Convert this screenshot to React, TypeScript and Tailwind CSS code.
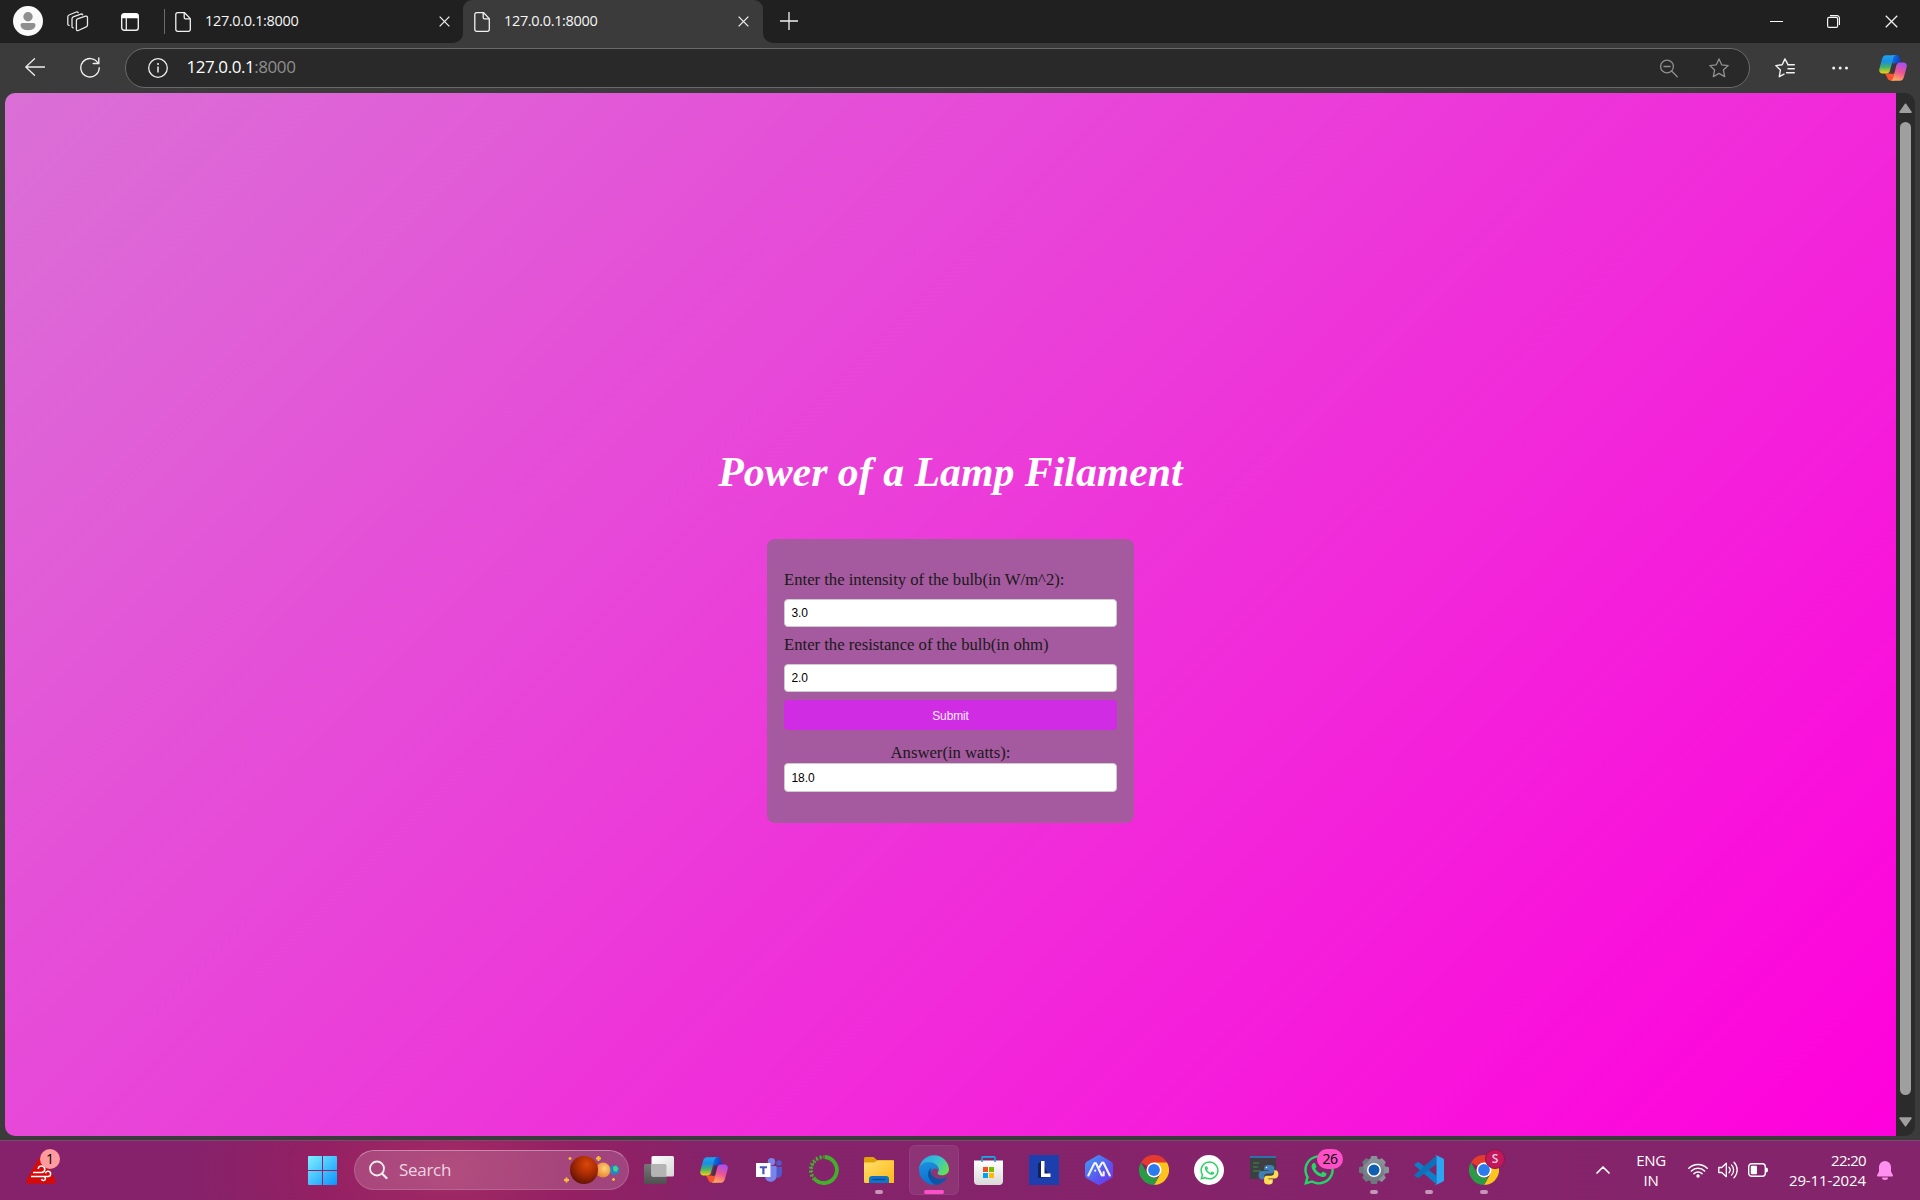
import React from "react";
import { FaWhatsapp } from "react-icons/fa";

type IconProps = { className?: string };

const DocIcon = ({ className }: IconProps) => (
  <svg className={className} width="16" height="20" viewBox="0 0 16 20" fill="none" stroke="#f2f2f2" strokeWidth="1.3" strokeLinejoin="round">
    <path d="M2.6 .7H9.6L15.3 6.6V17.5a1.8 1.8 0 0 1-1.8 1.8H2.6A1.8 1.8 0 0 1 .8 17.5V2.5A1.8 1.8 0 0 1 2.6 .7Z" />
    <path d="M9.2 .9V5.6a1.2 1.2 0 0 0 1.2 1.2H15" />
  </svg>
);

const CloseIcon = ({ size, width = 1.4 }: { size: number; width?: number }) => (
  <svg width={size} height={size} viewBox="0 0 12 12" stroke="#f0f0f0" strokeWidth={width} className="shrink-0">
    <path d="M.7 .7 11.3 11.3M11.3 .7 .7 11.3" />
  </svg>
);

const Copilot = ({ id }: { id: string }) => (
  <svg width="28" height="26" viewBox="0 0 28 26" className="shrink-0">
    <defs>
      <linearGradient id={id + "a"} x1="0" y1="0" x2="0" y2="1">
        <stop offset="0" stopColor="#1ba5f0" />
        <stop offset=".35" stopColor="#1b8ee0" />
        <stop offset=".65" stopColor="#46b26a" />
        <stop offset="1" stopColor="#f5d40c" />
      </linearGradient>
      <linearGradient id={id + "b"} x1=".6" y1="0" x2=".3" y2="1">
        <stop offset="0" stopColor="#a64ff0" />
        <stop offset=".5" stopColor="#ee5590" />
        <stop offset="1" stopColor="#ffae5c" />
      </linearGradient>
      <linearGradient id={id + "c"} x1="0" y1="0" x2="1" y2=".3">
        <stop offset="0" stopColor="#1677e6" />
        <stop offset="1" stopColor="#0b3fc4" />
      </linearGradient>
    </defs>
    <path d="M13 0h4.500c1.800 0 2.500 1 3 2.700L22 7.500h-3.500c-2 0-3 1-3.500 3L12.500 6Z" fill={"url(#" + id + "c)"} />
    <path d="M6 18.500h5l3-4 2 11H11.500C9.500 25.500 8.500 24 8 22Z" fill="#f4542f" />
    <path d="M7 .2H17c-1.600.4-2.300 1.500-2.800 3.300L11 15.600c-.6 2-1.600 3-3.600 3H3.500C.8 18.600-.3 16.500.4 13.800L3 4C3.700 1.500 5 .2 7 .2Z" fill={"url(#" + id + "a)"} />
    <path d="M21 25.700H11.500c1.600-.4 2.300-1.500 2.800-3.300L17.300 10.400c.6-2 1.600-3 3.600-3h3.600c2.700 0 3.800 2.100 3.100 4.800L25 21.800c-.7 2.500-2 3.900-4 3.900Z" fill={"url(#" + id + "b)"} />
    <path d="M14.500 8.500h3.800c-1 .5-1.400 1.400-1.800 2.700l-2 7.500h-3.600c.8-.5 1.200-1.400 1.600-2.700Z" fill="#3f3440" />
  </svg>
);

const TabTitle = ({ children }: { children: React.ReactNode }) => (
  <span className="mt-[-2px] whitespace-nowrap font-['Open_Sans','Noto_Sans',sans-serif] text-[14.5px] leading-5 tracking-[-0.34px] text-[#f5f5f5]">
    {children}
  </span>
);

const TitleBar = () => (
  <div className="flex h-[43px] w-full bg-[#3b3b3b]">
    <div className="flex w-[463px] items-center rounded-br-[10px] bg-[#202020]">
      <svg width="30" height="30" viewBox="0 0 30 30" className="ml-[13px] mt-[-1px]">
        <circle cx="15" cy="15" r="15" fill="#fafafa" />
        <circle cx="15" cy="10.700" r="4.700" fill="#8f8f8f" />
        <path d="M9.500 17H20.500a2 2 0 0 1 2 2C22.300 22.500 19 24.200 15 24.200S7.700 22.500 7.500 19a2 2 0 0 1 2-2Z" fill="#8f8f8f" />
      </svg>
      <svg width="22" height="21" viewBox="0 0 22 21" fill="none" stroke="#e8e8e8" strokeWidth="1.300" strokeLinejoin="round" strokeLinecap="round" className="ml-6">
        <path d="M10.500 7.800 18.500 5.200c1.100-.3 2 .3 2 1.400V14c0 .9-.5 1.600-1.300 1.900L11.300 19.500c-1.100.4-1.900-.1-1.900-1.200V9.600c0-.9.300-1.500 1.100-1.800Z" />
        <path d="M6.300 16.800c-.9.100-1.300-.4-1.300-1.300V7.700c0-.9.400-1.500 1.200-1.800L13.800 3.100c.9-.3 1.600 0 1.900.7" />
        <path d="M2.200 14.300c-.9.100-1.400-.4-1.400-1.300V5.800C.8 4.900 1.200 4.300 2 4L9.300 1c.9-.3 1.500-.1 1.900.6" />
      </svg>
      <svg width="18" height="18" viewBox="0 0 18 18" className="ml-8">
        <rect x=".7" y=".7" width="16.600" height="16.600" rx="2.500" fill="none" stroke="#eee" strokeWidth="1.400" />
        <path d="M.5 5.300V3A2.500 2.500 0 0 1 3 .5H15A2.500 2.500 0 0 1 17.500 3V5.300Z" fill="#fff" />
        <path d="M5.300 5V17" stroke="#eee" strokeWidth="1.300" />
      </svg>
      <div className="ml-[25px] h-[25px] w-px bg-[#6b6b6b]" />
      <DocIcon className="ml-[10px] mt-[1px]" />
      <div className="ml-[14px] flex"><TabTitle>127.0.0.1:8000</TabTitle></div>
      <div className="ml-auto mr-[13px]"><CloseIcon size={11} /></div>
    </div>
    <div className="w-[300px] bg-linear-to-b from-[#202020] from-50% to-[#3b3b3b] to-50%">
      <div className="flex h-full items-center rounded-t-[9px] bg-[#3b3b3b]">
        <DocIcon className="ml-[11px] mt-[1px]" />
        <div className="ml-[14px] flex"><TabTitle>127.0.0.1:8000</TabTitle></div>
        <div className="ml-auto mr-[14px]"><CloseIcon size={11} /></div>
      </div>
    </div>
    <div className="flex flex-1 items-center rounded-bl-[10px] bg-[#202020]">
      <svg width="18" height="18" viewBox="0 0 18 18" stroke="#f0f0f0" strokeWidth="1.300" className="ml-[17px] mt-[-1px]">
        <path d="M0 9H18M9 0V18" />
      </svg>
      <div className="ml-auto mr-[22px] flex items-center">
        <div className="h-px w-[13px] bg-white" />
        <svg width="13" height="13" viewBox="0 0 13 13" fill="none" stroke="#f5f5f5" strokeWidth="1.200" className="ml-[44px]">
          <rect x=".6" y="2.400" width="10" height="10" rx="1.500" />
          <path d="M3 .6H10A2.400 2.400 0 0 1 12.400 3V10" />
        </svg>
        <div className="ml-[45px]"><CloseIcon size={13} width={1.2} /></div>
      </div>
    </div>
  </div>
);

const ToolBar = () => (
  <div className="flex h-[50px] w-full items-center bg-[#3b3b3b]">
    <svg width="20" height="18" viewBox="0 0 20 18" fill="none" stroke="#eee" strokeWidth="1.300" strokeLinecap="round" strokeLinejoin="round" className="ml-[25px] mt-[-2px]">
      <path d="M9.500 .7 .8 9 9.500 17.300M.8 9H19.500" />
    </svg>
    <svg width="20" height="21" viewBox="0 0 20 21" fill="none" stroke="#eee" strokeWidth="1.400" strokeLinecap="round" className="ml-[35px] mt-[-1px]">
      <path d="M18 6.200A9.200 9.200 0 1 0 19.200 10.700" />
      <path d="M18.800 1V6.500H13.200" />
    </svg>
    <div className="ml-[25px] flex h-10 w-[1625px] items-center rounded-full border border-[#6a6a6a] bg-[#292929]">
      <svg width="20" height="20" viewBox="0 0 20 20" fill="none" stroke="#eee" strokeWidth="1.300" className="ml-[21.500px]">
        <circle cx="10" cy="10" r="9.300" />
        <path d="M10 8.600V14.500" strokeWidth="1.500" />
        <circle cx="10" cy="6" r="1" fill="#eee" stroke="none" />
      </svg>
      <span className="ml-[19px] mt-[-2px] whitespace-nowrap font-['Open_Sans','Noto_Sans',sans-serif] text-[17px] leading-6 tracking-[-0.44px] text-white">
        127.0.0.1<span className="text-[#8f8f8f]">:8000</span>
      </span>
      <svg width="18" height="19" viewBox="0 0 18 19" fill="none" stroke="#8f8f8f" strokeWidth="1.300" strokeLinecap="round" className="ml-auto">
        <circle cx="7" cy="7.500" r="6.400" />
        <path d="M4 7.500H10M11.600 12 17.300 17.800" />
      </svg>
      <svg width="20" height="20" viewBox="0 0 20 20" fill="none" stroke="#8f8f8f" strokeWidth="1.300" strokeLinejoin="round" className="ml-[31px] mr-5">
        <path d="M10 .9 12.700 6.800 19.200 7.600 14.400 12 15.700 18.600 10 15.400 4.300 18.600 5.600 12 .8 7.600 7.300 6.800Z" />
      </svg>
    </div>
    <svg width="20" height="20" viewBox="0 0 20 20" fill="none" stroke="#f2f2f2" strokeWidth="1.400" strokeLinejoin="round" strokeLinecap="round" className="ml-[25px]">
      <path d="M13 6.700 9.900 .9 7.200 6.800 .8 7.600 5.400 12 4.300 18.700 9 16.200" />
      <path d="M13 6.700H19.300M13 10.700H19.300M11.500 14.700H19.300" />
    </svg>
    <svg width="16" height="4" viewBox="0 0 16 4" fill="#f2f2f2" className="ml-[37px] mt-[-1px]">
      <circle cx="1.700" cy="2" r="1.500" />
      <circle cx="8.200" cy="2" r="1.500" />
      <circle cx="14.500" cy="2" r="1.500" />
    </svg>
    <div className="ml-[31px]"><Copilot id="tb" /></div>
  </div>
);

const Field = ({ value, tall }: { value: string; tall?: boolean }) => (
  <div
    className={
      (tall ? "h-[29px]" : "h-[28px]") +
      " flex items-center rounded-[4px] border border-[#ccc] bg-white pl-[6.500px] font-['Liberation_Sans',Arial,sans-serif] text-[12px] leading-none tracking-[-0.1px] text-black"
    }
  >
    {value}
  </div>
);

const Page = () => (
  <div className="flex h-[1043px] w-full bg-[#3b3b3b] pl-[5px]">
    <div className="flex w-[1891px] flex-col items-center rounded-l-[10px] bg-[linear-gradient(135deg,#da70d6,#ff00dc)] pt-[355px] font-['Liberation_Serif','Times_New_Roman',serif]">
      <h1 className="h-[48px] whitespace-nowrap text-[41.8px] font-bold italic leading-[48px] text-white">Power of a Lamp Filament</h1>
      <div className="mt-[43px] flex h-[284px] w-[367px] flex-col rounded-[8px] bg-[#a5599f] px-[17px] pt-[31px] text-[16.67px] leading-5 text-[#1a1a1a]">
        <div className="h-[29px]">Enter the intensity of the bulb(in W/m^2):</div>
        <Field value="3.0" />
        <div className="mt-2 h-[29px]">Enter the resistance of the bulb(in ohm)</div>
        <Field value="2.0" />
        <div className="mt-[8px] flex h-[30px] items-center justify-center rounded-[4px] bg-[#d02ce4] pt-px font-['Liberation_Sans',Arial,sans-serif] text-[12px] leading-none tracking-[-0.15px] text-[#fbeafd]">
          Submit
        </div>
        <div className="mt-[13px] h-5 text-center">Answer(in watts):</div>
        <Field value="18.0" tall />
      </div>
    </div>
    <div className="flex w-[19px] flex-col items-center rounded-r-[10px] bg-[#2b2b2b]">
      <svg width="13" height="11" viewBox="0 0 13 11" className="mt-[10px]" fill="#9f9f9f" stroke="#9f9f9f" strokeWidth="1.500" strokeLinejoin="round">
        <path d="M6.500 1.200 12 9.200H1Z" />
      </svg>
      <div className="mt-2 h-[973px] w-[11px] rounded-full bg-[#9f9f9f]" />
      <svg width="13" height="10" viewBox="0 0 13 10" className="mt-[22px]" fill="#9f9f9f" stroke="#9f9f9f" strokeWidth="1.500" strokeLinejoin="round">
        <path d="M6.500 8.800 12 1H1Z" />
      </svg>
    </div>
  </div>
);

const TaskView = () => (
  <svg width="30" height="28" viewBox="0 0 30 28">
    <defs>
      <linearGradient id="tvw" x1="0" y1="0" x2="1" y2="1"><stop stopColor="#fff" /><stop offset="1" stopColor="#d8d8d8" /></linearGradient>
      <linearGradient id="tvd" x1="0" y1="0" x2="0" y2="1"><stop stopColor="#777" /><stop offset="1" stopColor="#505050" /></linearGradient>
    </defs>
    <rect x="0" y="8" width="22.500" height="20" rx="1.500" fill="url(#tvd)" />
    <rect x="7.500" y="0" width="22.500" height="20.500" rx="1.500" fill="url(#tvw)" />
    <path d="M7.500 8H21a1.500 1.500 0 0 1 1.500 1.500V20.500H9A1.500 1.500 0 0 1 7.500 19Z" fill="#b4b4b4" />
  </svg>
);

const Teams = () => (
  <svg width="27" height="24" viewBox="0 0 27 24">
    <circle cx="23" cy="5" r="2.800" fill="#5059c9" />
    <path d="M18 9H26V15a4.500 4.500 0 0 1-8 3Z" fill="#5059c9" />
    <circle cx="15.500" cy="3.800" r="3.700" fill="#7b83eb" />
    <path d="M10 8H20.500V17a6 6 0 0 1-11 4Z" fill="#7b83eb" />
    <rect x="0" y="5" width="14.500" height="14" fill="#fff" />
    <path d="M3.800 8.300H11V10.300H8.500V16.300H6.300V10.300H3.800Z" fill="#4b53bc" />
  </svg>
);

const Ring = () => (
  <svg width="30" height="30" viewBox="0 0 30 30" fill="none" stroke="#43b02a">
    <path d="M15.500 2A13 13 0 1 1 5.500 24" strokeWidth="3.800" />
    <path d="M5.500 24A13 13 0 0 1 15 2" strokeWidth="4.200" strokeDasharray="1.700 2" />
    <path d="M4 22A13.500 13.500 0 0 1 14 2" strokeWidth="1.200" strokeDasharray="3 1.500" />
  </svg>
);

const Folder = () => (
  <svg width="30" height="28" viewBox="0 0 30 28">
    <defs><linearGradient id="fo" x1="0" y1="0" x2="1" y2="1"><stop stopColor="#ffdf70" /><stop offset="1" stopColor="#fdb813" /></linearGradient></defs>
    <path d="M0 2.500A1.500 1.500 0 0 1 1.500 1H9.500L13 4H28.500A1.500 1.500 0 0 1 30 5.500V10H0Z" fill="#e0a008" />
    <path d="M0 6.500H10L13.500 4.500H30V27H1.500A1.500 1.500 0 0 1 0 25.500Z" fill="url(#fo)" />
    <path d="M5 27V23a3 3 0 0 1 3-3H22a3 3 0 0 1 3 3V27Z" fill="#0f74c8" />
    <path d="M8.500 23.500H21.500" stroke="#084a8c" strokeWidth="1.200" />
  </svg>
);

const Edge = () => (
  <svg width="30" height="30" viewBox="0 0 24 24">
    <defs>
      <linearGradient id="e1" x1="0" y1=".2" x2="1" y2=".7"><stop stopColor="#2aa5e0" /><stop offset=".5" stopColor="#35c1d6" /><stop offset="1" stopColor="#66e24e" /></linearGradient>
      <linearGradient id="e2" x1=".2" y1="0" x2=".4" y2="1"><stop stopColor="#1b8fdc" /><stop offset="1" stopColor="#0c6fd0" /></linearGradient>
      <linearGradient id="e3" x1="0" y1="0" x2="1" y2=".6"><stop stopColor="#0d4f9e" /><stop offset="1" stopColor="#1055a8" /></linearGradient>
    </defs>
    <path d="M.1 11A12 12 0 0 1 24 11.200C24 14.500 21.500 16.200 18.600 16.200c-2.900 0-4.300-1.100-3.500-2.400C16.600 11.500 15.500 7.500 11 6.500Z" fill="url(#e1)" />
    <path d="M0 12C.2 8 3.500 5.600 7.500 5.600c4.500 0 8.300 3 8 6.800-1-2.400-5-2.300-5.700 1-.7 3.800 3 6.600 7 6.600 2 0 3.500-.6 5-1.200A12 12 0 0 1 0 12Z" fill="url(#e2)" />
    <path d="M9.800 10.300C6.500 12 5.300 19.500 13.500 23.900c4-.5 6.800-2.600 8.600-5.400.3-.5-.1-.8-.6-.5-1.300.7-2.800 1-4.300 1-5 0-9.400-4-7.400-8.700Z" fill="url(#e3)" />
  </svg>
);

const Store = () => (
  <svg width="29" height="29" viewBox="0 0 29 29">
    <defs><linearGradient id="st" x1="0" y1="0" x2="0" y2="1"><stop stopColor="#fff" /><stop offset="1" stopColor="#d9d9d9" /></linearGradient></defs>
    <path d="M8 6V2A1.200 1.200 0 0 1 9.200 .8H19.800A1.200 1.200 0 0 1 21 2V6" fill="none" stroke="#1ba8e4" strokeWidth="1.700" />
    <path d="M0 4.500H29V25a4 4 0 0 1-4 4H4a4 4 0 0 1-4-4Z" fill="url(#st)" />
    <path d="M8 1.500V6M21 1.500V6" stroke="#1590d0" strokeWidth="1.500" />
    <rect x="9" y="11" width="5" height="5" fill="#f25022" />
    <rect x="15" y="11" width="5" height="5" fill="#7fba00" />
    <rect x="9" y="17" width="5" height="5" fill="#00a4ef" />
    <rect x="15" y="17" width="5" height="5" fill="#ffb900" />
  </svg>
);

const LBox = () => (
  <svg width="30" height="30" viewBox="0 0 30 30">
    <rect width="30" height="30" fill="#1d3fae" />
    <path d="M12 6 9 9V23L21 22Z" fill="#10225e" />
    <path d="M12 6H15.500V18.500H21.500V22H12Z" fill="#fff" />
  </svg>
);

const Hex = () => (
  <svg width="28" height="30" viewBox="0 0 28 30">
    <defs><linearGradient id="hx" x1="0" y1="0" x2="1" y2="1"><stop stopColor="#3fa0f5" /><stop offset=".6" stopColor="#5a55ee" /><stop offset="1" stopColor="#7430f0" /></linearGradient></defs>
    <path d="M12 .7a4 4 0 0 1 4 0L26 6.400a4 4 0 0 1 2 3.400V20.200a4 4 0 0 1-2 3.400L16 29.300a4 4 0 0 1-4 0L2 23.600a4 4 0 0 1-2-3.400V9.800A4 4 0 0 1 2 6.400Z" fill="url(#hx)" />
    <path d="M3.300 20.500 9.300 8.500a1 1 0 0 1 1.800 0L16.800 20.500M14.500 12 16.800 8a1 1 0 0 1 1.800 0L24.800 20.500M10.200 15.500V15.700M18.700 17V20.500" fill="none" stroke="#f3f3ff" strokeWidth="2.100" strokeLinecap="round" strokeLinejoin="round" />
  </svg>
);

const Chrome = () => (
  <svg width="30" height="30" viewBox="0 0 30 30">
    <path d="M15 15 2 7.500A15 15 0 0 1 28 7.500Z" fill="#e33b2e" />
    <path d="M15 7.500H28A15 15 0 0 1 15 30L21.500 18.800Z" fill="#fcc31e" />
    <path d="M2 7.500 8.500 18.800C10 21.300 12.300 22.500 15 22.500h4.300L15 30A15 15 0 0 1 2 7.500Z" fill="#2a9a47" />
    <circle cx="15" cy="15" r="7.500" fill="#fff" />
    <circle cx="15" cy="15" r="5.900" fill="#2b7bee" />
  </svg>
);

const Python = () => (
  <svg width="29" height="29" viewBox="0 0 29 29">
    <rect x="0" y="0" width="26" height="23" fill="#3d3f42" />
    <rect x="0" y="0" width="26" height="2" fill="#2f6fae" />
    <path d="M3 7H9M3 11H8M3 15H11" stroke="#3d8f46" strokeWidth="1" />
    <path d="M18.500 9c-3 0-4.300 1-4.300 3v2.200h4.500v.8h-6.500c-2.300 0-3.600 1.500-3.600 4.200s1.300 4.100 3.200 4.100H14v-2.500c0-2 1.500-3.300 3.500-3.300h4.200c1.600 0 2.600-1.200 2.600-2.700V12c0-2-1.500-3-5.800-3Z" fill="#3f7fb5" />
    <path d="M18.500 28.500c3 0 4.300-1 4.300-3v-2.200h-4.500v-.8h6.500c2.300 0 3.600-1.500 3.600-4.200s-1.300-4-3.200-4h-1V16.500c0 2-1.500 3.300-3.500 3.300h-3.800c-1.800 0-2.800 1.200-2.800 2.700v3c0 2 1.500 3 4.400 3Z" fill="#ffdc52" />
    <circle cx="16.500" cy="11.500" r=".8" fill="#fff" />
    <circle cx="20.500" cy="26" r=".8" fill="#fff" />
  </svg>
);

const Gear = () => (
  <svg width="30" height="30" viewBox="0 0 30 30">
    <defs><linearGradient id="gr" x1="0" y1="0" x2="0" y2="1"><stop stopColor="#8b949b" /><stop offset="1" stopColor="#6c757c" /></linearGradient></defs>
    <g fill="url(#gr)">
      <circle cx="15" cy="15" r="11.700" />
      <path d="M11.200 5 11.900 1.600Q12.100 1 12.800 1H17.200Q17.900 1 18.100 1.600L18.800 5ZM11.200 25 11.900 28.400Q12.100 29 12.800 29H17.200Q17.900 29 18.100 28.400L18.800 25Z" />
      <path d="M11.200 5 11.900 1.600Q12.100 1 12.800 1H17.200Q17.900 1 18.100 1.600L18.800 5ZM11.200 25 11.900 28.400Q12.100 29 12.800 29H17.200Q17.900 29 18.100 28.400L18.800 25Z" transform="rotate(45 15 15)" />
      <path d="M11.200 5 11.900 .8Q12.100 0 12.800 0H17.200Q17.900 0 18.100 .8L18.800 5ZM11.200 25 11.900 29.200Q12.100 30 12.800 30H17.200Q17.900 30 18.100 29.200L18.800 25Z" transform="rotate(90 15 15)" />
      <path d="M11.200 5 11.900 1.600Q12.100 1 12.800 1H17.200Q17.900 1 18.100 1.600L18.800 5ZM11.200 25 11.900 28.400Q12.100 29 12.800 29H17.200Q17.900 29 18.100 28.400L18.800 25Z" transform="rotate(135 15 15)" />
    </g>
    <circle cx="15" cy="15" r="7" fill="#fff" />
    <circle cx="15" cy="15" r="5.500" fill="#0f5fae" />
  </svg>
);

const VsCode = () => (
  <svg width="30" height="30" viewBox="0 0 30 30">
    <path d="M1.500 8.500 3.200 7.200a1.400 1.400 0 0 1 1.600 0L22.500 21V28.500a2 2 0 0 1-1.800-.6L.8 10.500a1.300 1.300 0 0 1 .7-2Z" fill="#0b7fc7" />
    <path d="M1.500 21.500 3.200 22.800a1.400 1.400 0 0 0 1.600 0L22.500 9V1.500a2 2 0 0 0-1.800.6L.8 19.500a1.300 1.300 0 0 0 .7 2Z" fill="#0e70b8" />
    <path d="M22.300 .3 28.800 3.300A2 2 0 0 1 30 5.100V24.900a2 2 0 0 1-1.200 1.800L22.300 29.700a2 2 0 0 1-2-.4c.9.700 2.200 0 2.200-1.100V1.800c0-1.200-1.300-1.800-2.200-1.100a2 2 0 0 1 2-.4Z" fill="#2aa6f2" />
  </svg>
);

const Cell = ({ children, dot, active }: { children: React.ReactNode; dot?: boolean; active?: boolean }) => (
  <div className="relative flex h-[60px] w-[55px] items-center justify-center">
    {active && <div className="absolute left-[2px] top-[5px] h-[50px] w-[50px] rounded-[6px] border border-white/6 bg-white/8" />}
    <div className="relative">{children}</div>
    {dot && <div className="absolute bottom-[6px] h-1 w-2 rounded-full bg-[#c795b9]" />}
    {active && <div className="absolute bottom-[6px] h-1 w-5 rounded-full bg-[#ff4fc8]" />}
  </div>
);

const TaskBar = () => (
  <div className="flex h-[64px] w-full flex-col bg-[#3b3b3b] pt-[4px]">
    <div className="flex h-[60px] items-center bg-[radial-gradient(ellipse_270px_160px_at_450px_30px,#a32b66_0%,#932063_50%,transparent_100%),linear-gradient(90deg,#85226b,#84246a)] shadow-[inset_0_1px_0_#7a4a70]">
      <div className="relative ml-[26px] h-[60px] w-[34px]">
        <svg width="30" height="27" viewBox="0 0 30 27" className="mt-[17px]">
          <path d="M12.500 1.500a3 3 0 0 1 5 0L29.500 23a2.500 2.500 0 0 1-2.200 3.700H2.700A2.500 2.500 0 0 1 .5 23Z" fill="#d50a0a" />
          <path d="M7 15.500H15.500a3.300 3.300 0 1 0-3.300-3.500M5 19.500H22a2.600 2.600 0 1 0-2.500-3.200M9 19.500H17.500a2 2 0 1 1-2 2.500" fill="none" stroke="#fff" strokeWidth="1.500" />
        </svg>
        <div className="absolute left-[14px] top-[9px] flex h-5 w-5 items-center justify-center rounded-full bg-[#ff9a9e] font-['Open_Sans',sans-serif] text-[14px] leading-none text-black">1</div>
      </div>
      <svg width="29" height="29" viewBox="0 0 29 29" className="ml-[248px]">
        <defs><linearGradient id="wn" x1="0" y1="0" x2="29" y2="29" gradientUnits="userSpaceOnUse"><stop stopColor="#7ff0ff" /><stop offset="1" stopColor="#0a93ff" /></linearGradient></defs>
        <path d="M1 0H14V14H0V1A1 1 0 0 1 1 0ZM15 0H28A1 1 0 0 1 29 1V14H15ZM0 15H14V29H1A1 1 0 0 1 0 28ZM15 15H29V28A1 1 0 0 1 28 29H15Z" fill="url(#wn)" />
      </svg>
      <div className="ml-[17px] flex h-10 w-[275px] items-center rounded-full border border-white/15 border-t-white/35 bg-white/16">
        <svg width="19" height="20" viewBox="0 0 19 20" fill="none" stroke="#eee" strokeWidth="1.800" strokeLinecap="round" className="ml-[14px]">
          <circle cx="8" cy="8.500" r="7" />
          <path d="M13.200 13.700 17.500 18" strokeWidth="2.300" />
        </svg>
        <span className="ml-[11px] font-['Open_Sans',sans-serif] text-[17px] leading-6 tracking-[-0.3px] text-[#ecd5e2]">Search</span>
        <svg width="56" height="30" viewBox="0 0 56 30" className="ml-auto mr-[8px]">
          <defs>
            <radialGradient id="p1" cx=".6" cy=".3" r=".75"><stop stopColor="#d94808" /><stop offset=".5" stopColor="#a82a04" /><stop offset="1" stopColor="#5a1204" /></radialGradient>
            <radialGradient id="p2" cx=".6" cy=".4" r=".6"><stop stopColor="#ffd27a" /><stop offset="1" stopColor="#e8862e" /></radialGradient>
          </defs>
          <circle cx="50.500" cy="15" r="5" fill="#2383c4" />
          <path d="M49 12l3-1.500 2.500 3-2 3.500-3-1Z" fill="#45d08e" />
          <circle cx="39" cy="15" r="7.500" fill="url(#p2)" />
          <circle cx="20" cy="15" r="14" fill="url(#p1)" />
          <path d="M2.500 22.500v5M0 25h5M34.500 1v5M32 3.500h5" stroke="#f5c52e" strokeWidth="2" />
          <path d="M6 2v3M4.500 3.500h3M49.500 23v3M48 24.500h3" stroke="#f5c52e" strokeWidth="1.300" />
        </svg>
      </div>
      <div className="ml-[2.500px] flex items-center">
        <Cell><TaskView /></Cell>
        <Cell><Copilot id="tk" /></Cell>
        <Cell><Teams /></Cell>
        <Cell><Ring /></Cell>
        <Cell dot><Folder /></Cell>
        <Cell active><Edge /></Cell>
        <Cell><div className="mr-px"><Store /></div></Cell>
        <Cell><LBox /></Cell>
        <Cell><Hex /></Cell>
        <Cell><Chrome /></Cell>
        <Cell>
          <div className="flex h-[30px] w-[30px] items-center justify-center rounded-full bg-white"><FaWhatsapp size={21} color="#2fd366" /></div>
        </Cell>
        <Cell><div className="mr-[-1px]"><Python /></div></Cell>
        <Cell>
          <FaWhatsapp size={34} color="#25d366" />
          <div className="absolute -top-[4px] left-[15px] flex h-5 w-[26px] items-center justify-center rounded-full bg-[#ff4fc8] font-['Open_Sans',sans-serif] text-[14px] leading-none tracking-[-0.5px] text-black">26</div>
        </Cell>
        <Cell dot><Gear /></Cell>
        <Cell dot><VsCode /></Cell>
        <Cell dot>
          <Chrome />
          <div className="absolute -top-[6px] left-4 flex h-5 w-5 items-center justify-center rounded-full border border-[#8c1748] bg-[#c2185b] font-['Open_Sans',sans-serif] text-[12px] font-semibold leading-none text-[#f5c6dc]">S</div>
        </Cell>
      </div>
      <div className="ml-auto flex items-center font-['Open_Sans',sans-serif] text-[15px] leading-5 text-white">
        <svg width="14" height="8" viewBox="0 0 14 8" fill="none" stroke="#fff" strokeWidth="1.700" strokeLinecap="round" strokeLinejoin="round"><path d="M1 7 7 1 13 7" /></svg>
        <div className="ml-[23px] w-[36px] text-center tracking-[-0.35px]">
          <div>ENG</div>
          <div>IN</div>
        </div>
        <svg width="20" height="15" viewBox="0 0 20 15" fill="none" stroke="#fff" strokeWidth="1.500" strokeLinecap="round" className="ml-[19px]">
          <path d="M.8 5.200a13 13 0 0 1 18.400 0M3.400 8a9.400 9.400 0 0 1 13.200 0M6 10.600a5.700 5.700 0 0 1 8 0" />
          <circle cx="10" cy="13" r="1.700" fill="#fff" stroke="none" />
        </svg>
        <svg width="20" height="18" viewBox="0 0 20 18" fill="none" stroke="#fff" strokeWidth="1.300" strokeLinecap="round" strokeLinejoin="round" className="ml-[10px]">
          <path d="M.8 6.500H3.800L8.300 2.300V15.700L3.800 11.500H.8Z" />
          <path d="M11 6.300a4 4 0 0 1 0 5.400M13.500 3.900a7.200 7.200 0 0 1 0 10.200M16 1.300a11 11 0 0 1 0 15.400" />
        </svg>
        <svg width="20" height="14" viewBox="0 0 20 14" className="ml-[10px]">
          <rect x=".7" y=".7" width="16.600" height="12.600" rx="3" fill="none" stroke="#fff" strokeWidth="1.400" />
          <rect x="2.800" y="2.800" width="6.200" height="8.400" rx="1" fill="#fff" />
          <path d="M18 4.500a2 2 0 0 1 2 2V7.500a2 2 0 0 1-2 2Z" fill="#fff" />
        </svg>
        <div className="ml-[15px] w-[83px] text-right tracking-[-0.12px]">
          <div className="tracking-[-0.65px]">22:20</div>
          <div className="whitespace-nowrap">29-11-2024</div>
        </div>
        <svg width="16" height="19" viewBox="0 0 16 19" fill="#ff8ff0" className="ml-[11px] mr-[27px]">
          <path d="M8 0a6 6 0 0 1 6 6V10.500L15.900 14.300c.3.700-.1 1.200-.8 1.200H.9C.2 15.500-.2 15 .1 14.300L2 10.500V6A6 6 0 0 1 8 0ZM5 16.500H11a3 2.500 0 0 1-6 0Z" />
        </svg>
      </div>
    </div>
  </div>
);

export default function App() {
  return (
    <div className="flex h-[1200px] w-[1920px] flex-col overflow-hidden bg-[#3b3b3b]">
      <TitleBar />
      <ToolBar />
      <Page />
      <TaskBar />
    </div>
  );
}
